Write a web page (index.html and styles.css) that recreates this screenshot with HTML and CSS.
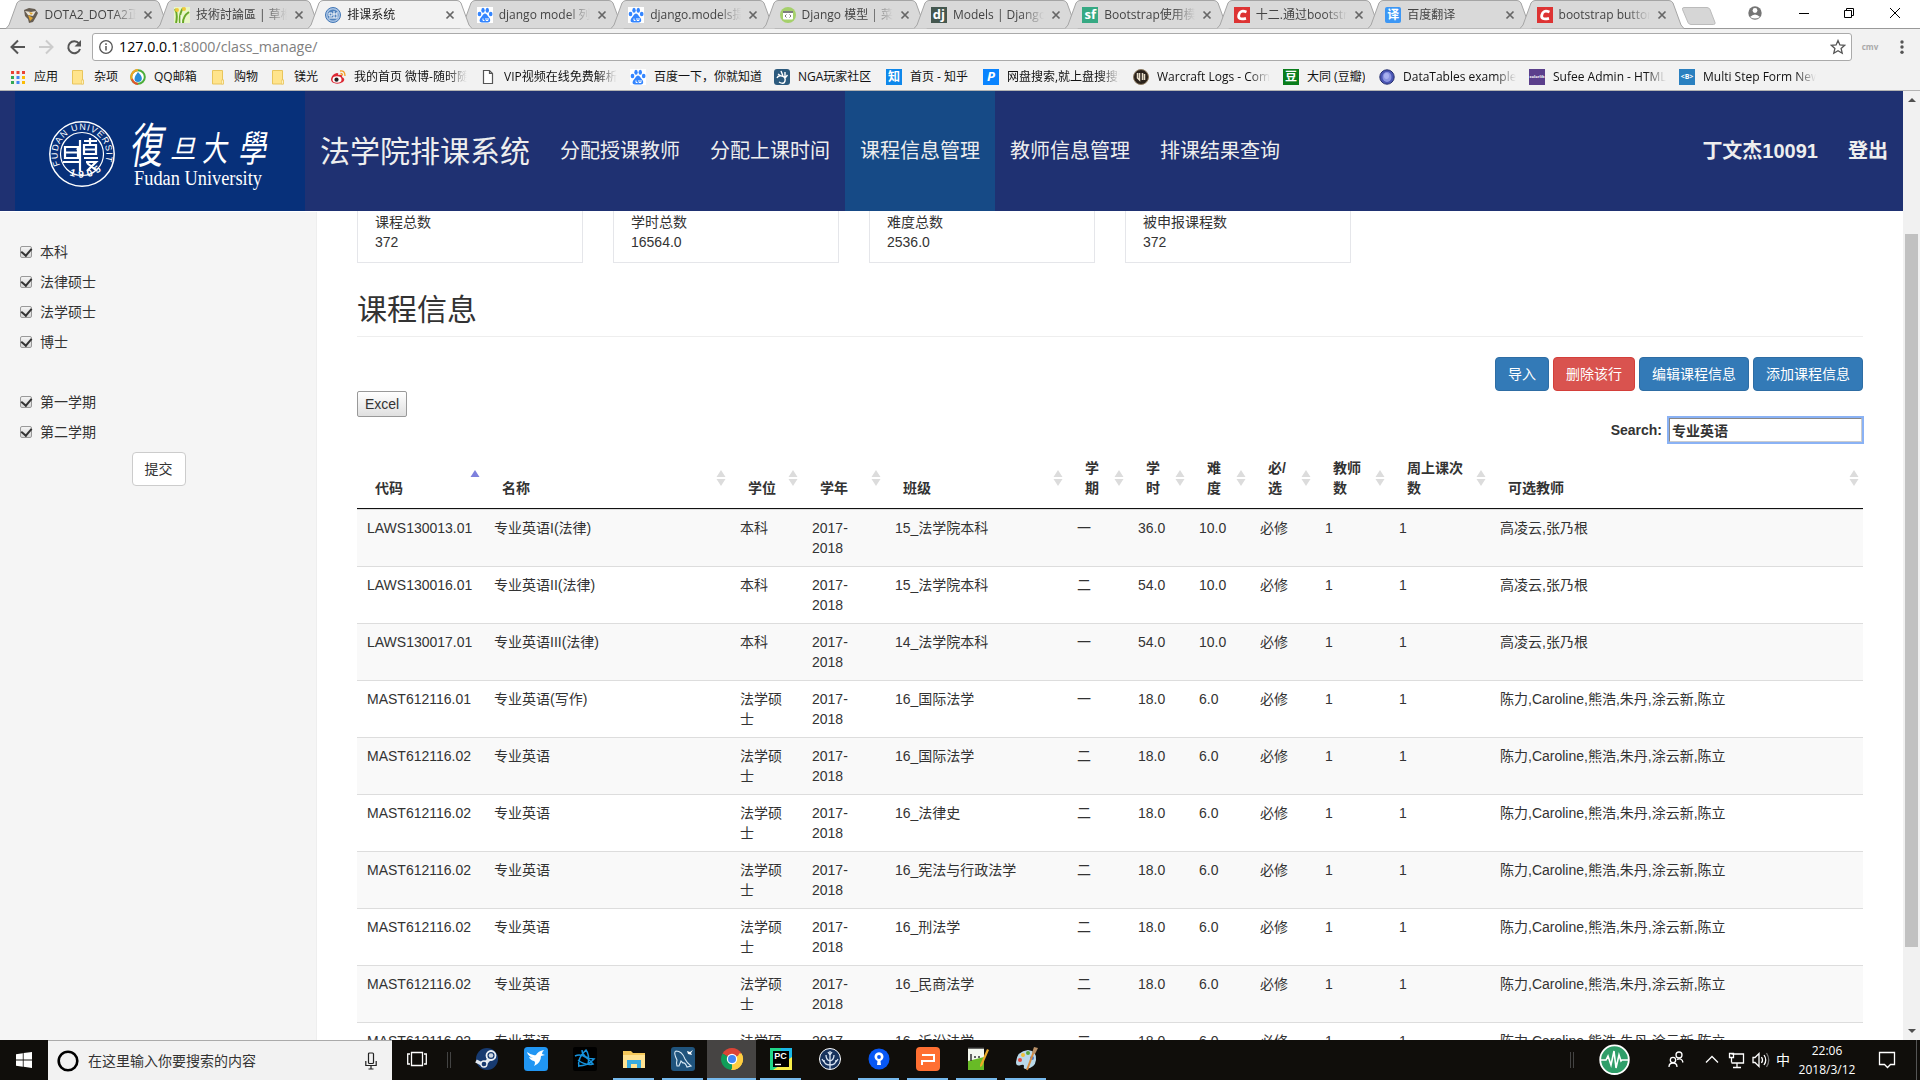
FILE: index.html
```html
<!DOCTYPE html>
<html lang="zh-CN">
<head>
<meta charset="utf-8">
<title>排课系统</title>
<link rel="stylesheet" href="styles.css">
</head>
<body>
<svg class="defs" width="0" height="0">
  <symbol id="tab" viewBox="0 0 164 29"><path d="M0 28.5L3 25 11 3Q12.500 .5 15 .5H149Q151.500 .5 153 3L161 25 164 28.500"/></symbol>
  <symbol id="x" viewBox="0 0 10 10"><path d="M1.500 1.500l7 7M8.500 1.500l-7 7" stroke="#666" stroke-width="1.700"/></symbol>
  <symbol id="paw" viewBox="0 0 16 16"><rect width="16" height="16" fill="#fff"/><g fill="#3385ff"><ellipse cx="2.500" cy="7" rx="1.800" ry="2.300"/><ellipse cx="6" cy="3.300" rx="1.700" ry="2.500"/><ellipse cx="10.300" cy="3.300" rx="1.700" ry="2.500"/><ellipse cx="13.700" cy="7" rx="1.800" ry="2.300"/><path d="M8 6.500c2 0 2.500 2.500 4 4 2 2 1.500 5-1 5H5c-3 0-3-3-1-5 1.500-1.500 2-4 4-4z"/></g><path d="M6 11.500v2h1.500M9 11v2.500h2V11" stroke="#fff" fill="none"/></symbol>
  <symbol id="folder" viewBox="0 0 16 16"><path d="M2.500 1.500h10v9.500h1v4h-11z" fill="#ffe48c" stroke="#e8c55c"/><path d="M11.500 11h2v4h-2z" fill="#fff0bd" stroke="#e8c55c" stroke-width=".6"/></symbol>
  <symbol id="c" viewBox="0 0 16 16"><rect width="16" height="16" fill="#d33"/><path d="M12.500 5Q6 2.500 4.800 8T12 11.300" fill="none" stroke="#fff" stroke-width="2.800"/></symbol>
  <symbol id="sort" viewBox="0 0 10 16"><path d="M5 0l4.500 7h-9zM5 16l4.500-7h-9z" fill="#dcdcdc"/></symbol>
</svg>

<div class="browser">
  <div class="titlebar">
    <div class="tabs">
      <div class="tab"><svg class="shape"><use href="#tab"/></svg><svg class="fav" viewBox="0 0 16 16"><path d="M1 3l5-2 6 1 3 4-2 4-3 5-4 1-1-4-3-3z" fill="#665d52"/><path d="M2 4l6 1 5-1-3 5-5-1z" fill="#e8e2d6"/><path d="M5 8l5 3-3 3zM6 5l4 1-2 2z" fill="#e0a42c"/></svg><span>DOTA2_DOTA2正式</span><svg class="close"><use href="#x"/></svg></div>
      <div class="tab"><svg class="shape"><use href="#tab"/></svg><svg class="fav" viewBox="0 0 16 16"><rect width="16" height="16" fill="#e9f6c7"/><path d="M2 16Q4 7 1 2M6 16Q5 7 9 1M9 16Q9 9 15 5" fill="none" stroke="#69a829" stroke-width="2"/><circle cx="3" cy="3" r="2" fill="#f1ca3a"/><circle cx="10" cy="2" r="2" fill="#f1ca3a"/><path d="M7 16V8" stroke="#fff"/></svg><span>技術討論區 | 草榴社區</span><svg class="close"><use href="#x"/></svg></div>
      <div class="tab active"><svg class="shape"><use href="#tab"/></svg><svg class="fav" viewBox="0 0 16 16"><circle cx="8" cy="8" r="7.500" fill="#a9c4e4" stroke="#4277b6"/><circle cx="8" cy="8" r="5.500" fill="#4f82bd"/><path d="M4 6h3v3H4zM4 11h8M9 4v7M12 5v6M8 7h4" stroke="#fff" fill="none"/></svg><span>排课系统</span><svg class="close"><use href="#x"/></svg></div>
      <div class="tab"><svg class="shape"><use href="#tab"/></svg><svg class="fav"><use href="#paw"/></svg><span>django model 列表</span><svg class="close"><use href="#x"/></svg></div>
      <div class="tab"><svg class="shape"><use href="#tab"/></svg><svg class="fav"><use href="#paw"/></svg><span>django.models提示</span><svg class="close"><use href="#x"/></svg></div>
      <div class="tab"><svg class="shape"><use href="#tab"/></svg><svg class="fav" viewBox="0 0 16 16"><circle cx="8" cy="8" r="8" fill="#a5d06b"/><rect x="3" y="4" width="10" height="8.500" rx="1" fill="#fff"/><path d="M3 5h10" stroke="#555" stroke-width="1.500"/><path d="M6.500 7.500L5 9l1.500 1.500M9.500 7.500L11 9l-1.500 1.500" fill="none" stroke="#555" stroke-width=".8"/></svg><span>Django 模型 | 菜鸟</span><svg class="close"><use href="#x"/></svg></div>
      <div class="tab"><svg class="shape"><use href="#tab"/></svg><b class="fav dj">dj</b><span>Models | Django d</span><svg class="close"><use href="#x"/></svg></div>
      <div class="tab"><svg class="shape"><use href="#tab"/></svg><b class="fav sf">sf</b><span>Bootstrap使用模态</span><svg class="close"><use href="#x"/></svg></div>
      <div class="tab"><svg class="shape"><use href="#tab"/></svg><svg class="fav"><use href="#c"/></svg><span>十二.通过bootstrap</span><svg class="close"><use href="#x"/></svg></div>
      <div class="tab"><svg class="shape"><use href="#tab"/></svg><b class="fav yi">译</b><span>百度翻译</span><svg class="close"><use href="#x"/></svg></div>
      <div class="tab"><svg class="shape"><use href="#tab"/></svg><svg class="fav"><use href="#c"/></svg><span>bootstrap button</span><svg class="close"><use href="#x"/></svg></div>
    </div>
    <svg class="newtab" viewBox="0 0 36 18"><path d="M3 .5h23q2 0 3 2l5 13q.5 2-1.500 2H10q-2 0-3-2L1.500 2.500Q1 .5 3 .5z" fill="#d6d6d6" stroke="#bbb"/></svg>
    <svg class="winctl" viewBox="0 0 180 28" width="180" height="28"><circle cx="15" cy="13" r="6.700" fill="#757575"/><circle cx="15" cy="10.500" r="2.400" fill="#fff"/><path d="M10 17q5-5 10 0-5 3-10 0z" fill="#fff"/><path d="M59 13.500h10" stroke="#000"/><path d="M104.500 10.500h7v7h-7zM106.500 10V8.500h7v7H112M150 8l10 10M160 8l-10 10" fill="none" stroke="#000"/></svg>
  </div>
  <div class="toolbar">
    <svg class="navicons" width="92" height="36" viewBox="0 0 92 36"><g fill="none" stroke="#555" stroke-width="2"><path d="M25 18H12M18 11.500L11.500 18l6.500 6.500"/><path d="M39 18h13M46 11.500l6.500 6.500-6.500 6.500" stroke="#ccc"/><path d="M79 14.500A6 6 0 1 0 80 20"/></g><path d="M81 11v6.500h-6.500z" fill="#555"/></svg>
    <div class="address">
      <svg width="16" height="16" viewBox="0 0 16 16"><circle cx="8" cy="8" r="6.300" fill="none" stroke="#555" stroke-width="1.300"/><path d="M8 7v4.500M8 4.300V6" stroke="#555" stroke-width="1.500"/></svg>
      <span class="url"><i>127.0.0.1</i>:8000/class_manage/</span>
      <svg class="star" width="16" height="16" viewBox="0 0 16 16"><path d="M8 1.500l1.900 4.400 4.800.4-3.600 3.200 1.100 4.700L8 11.700l-4.200 2.500 1.100-4.700L1.300 6.300l4.800-.4z" fill="none" stroke="#555" stroke-width="1.300"/></svg>
    </div>
    <span class="ext">cmv</span>
    <svg width="6" height="16" viewBox="0 0 6 16"><g fill="#555"><circle cx="3" cy="3" r="1.700"/><circle cx="3" cy="8" r="1.700"/><circle cx="3" cy="13.200" r="1.700"/></g></svg>
  </div>
  <div class="bookmarks">
    <div><svg viewBox="0 0 16 16"><path d="M1 3.500h14" stroke="#e94335" stroke-width="3" stroke-dasharray="3 2.500"/><path d="M1 8.500h3M1 13.500h3" stroke="#34a853" stroke-width="3"/><path d="M6.500 8.500h3M6.500 13.500h3" stroke="#4285f4" stroke-width="3"/><path d="M12 8.500h3M12 13.500h3" stroke="#fbbc05" stroke-width="3"/></svg><span>应用</span></div>
    <div><svg><use href="#folder"/></svg><span>杂项</span></div>
    <div><svg viewBox="0 0 16 16"><circle cx="8" cy="8" r="6.800" fill="#fff" stroke="#4cae3a" stroke-width="2"/><path d="M2 11A7 7 0 0 1 8 1" fill="none" stroke="#f2a423" stroke-width="2"/><path d="M8 15A7 7 0 0 1 2 10" fill="none" stroke="#e5522d" stroke-width="2"/><path d="M8 3q6 6 3 9-3 2-6 0-2-3 3-9z" fill="#2a8ed8"/></svg><span>QQ邮箱</span></div>
    <div><svg><use href="#folder"/></svg><span>购物</span></div>
    <div><svg><use href="#folder"/></svg><span>镁光</span></div>
    <div><svg viewBox="0 0 16 16"><path d="M1 10q1-5 6-6 2 0 1 2 5-1 4 2 4 2 1 5-5 3-9 1-3-1-3-4z" fill="#dc2834"/><ellipse cx="7" cy="10.500" rx="4.500" ry="3.200" fill="#fff"/><circle cx="6.500" cy="10.700" r="2.100" fill="#222"/><path d="M10 2q5-1 5 5M10.500 4.500q2 0 2 2" fill="none" stroke="#f39b26" stroke-width="1.300"/></svg><span>我的首页 微博-随时随地</span></div>
    <div><svg viewBox="0 0 16 16"><path d="M3.500 1.500h6l3 3v10h-9zM9.500 1.500v3h3" fill="#fff" stroke="#555" stroke-width="1.200"/></svg><span>VIP视频在线免费解析</span></div>
    <div><svg><use href="#paw"/></svg><span>百度一下，你就知道</span></div>
    <div><svg viewBox="0 0 16 16"><rect width="16" height="16" rx="3" fill="#2c5a7d"/><path d="M5 13q5 3 6-1 1-4-3-5-4-1-5 2M4 5l3 2M7 2l2 5M11 3v5M13.500 6L11 9" fill="none" stroke="#fff" stroke-width="1.400"/></svg><span>NGA玩家社区</span></div>
    <div><b class="zhi">知</b><span>首页 - 知乎</span></div>
    <div><b class="pp">P</b><span>网盘搜索,就上盘搜搜索</span></div>
    <div><svg viewBox="0 0 16 16"><circle cx="8" cy="8" r="7.500" fill="#2a221b" stroke="#8d7b61"/><path d="M4.500 4v5l2 2V4M9.500 11V4M11.500 5v6" fill="none" stroke="#e8dec9" stroke-width="1.500"/></svg><span>Warcraft Logs - Comb</span></div>
    <div><b class="dou">豆</b><span>大同 (豆瓣)</span></div>
    <div><svg viewBox="0 0 16 16"><circle cx="8" cy="8" r="7.200" fill="#4a55b4" stroke="#26306f"/><ellipse cx="8" cy="8" rx="4.500" ry="5" fill="#8a94e0"/><ellipse cx="7.500" cy="7" rx="2.500" ry="3" fill="#a9b1f0"/></svg><span>DataTables example</span></div>
    <div><b class="color">colorlib</b><span>Sufee Admin - HTML5</span></div>
    <div><b class="bb">&lt;B&gt;</b><span>Multi Step Form New</span></div>
  </div>
</div>

<div class="viewport">
  <div class="page">
    <nav class="navbar">
      <svg class="logo" viewBox="0 0 290 120" width="290" height="120">
        <defs><path id="ring" d="M45.200 74A24.300 24.300 0 1 1 88.800 74"/><path id="ring2" d="M41 72A30.500 30.500 0 0 0 93 72"/></defs>
        <circle cx="67" cy="63" r="32.200" fill="none" stroke="#fff" stroke-width="1.500"/>
        <circle cx="67" cy="63" r="21.500" fill="none" stroke="#fff" stroke-width="1.200"/>
        <text class="sealtext"><textPath href="#ring">FUDAN UNIVERSITY</textPath></text>
        <text class="sealyear"><textPath href="#ring2" startOffset="18">1905</textPath></text>
        <g fill="none" stroke="#fff" stroke-width="2.200"><path d="M50 56h13v11H50zM50 61.500h13M48 71h16M65 49v6l-3 4M65 53v27M69 50h13M69 54h12v9H69zM69 58.500h12M69 67h14M71 71h10l-9 9M72 72l10 8M75 47v7"/></g>
        <g class="brush"><text transform="translate(114 72) scale(.83 1.200) skewX(-13)" font-size="40">復</text><text transform="translate(155 67) skewX(-13)" font-size="26">旦</text><text transform="translate(187 70) scale(.85 1.150) skewX(-10)" font-size="30">大</text><text transform="translate(223 71) scale(.9 1.200) skewX(-13)" font-size="31">學</text></g>
        <text class="fudan" x="119" y="94" textLength="128" lengthAdjust="spacingAndGlyphs">Fudan University</text>
      </svg>
      <a class="brand">法学院排课系统</a>
      <a>分配授课教师</a><a>分配上课时间</a><a class="current">课程信息管理</a><a>教师信息管理</a><a>排课结果查询</a>
      <a class="user">丁文杰10091</a><a class="logout">登出</a>
    </nav>
    <div class="body">
      <aside class="sidebar">
        <label><i class="check"></i>本科</label>
        <label><i class="check"></i>法律硕士</label>
        <label><i class="check"></i>法学硕士</label>
        <label><i class="check"></i>博士</label>
        <label class="term"><i class="check"></i>第一学期</label>
        <label><i class="check"></i>第二学期</label>
        <button class="btn submit">提交</button>
      </aside>
      <main>
        <div class="cards">
          <div>课程总数<br>372</div><div>学时总数<br>16564.0</div><div>难度总数<br>2536.0</div><div>被申报课程数<br>372</div>
        </div>
        <h1>课程信息</h1>
        <div class="actions"><button class="btn primary">导入</button><button class="btn danger">删除该行</button><button class="btn primary">编辑课程信息</button><button class="btn primary">添加课程信息</button></div>
        <button class="excel">Excel</button>
        <label class="search">Search:<input type="text" value="专业英语"></label>
        <table>
          <colgroup><col class="c1"><col class="c2"><col class="c3"><col class="c4"><col class="c5"><col class="c6"><col class="c6"><col class="c6"><col class="c9"><col class="c10"><col class="c11"><col></colgroup>
          <thead><tr>
            <th>代码<svg class="sort" viewBox="0 0 10 16"><path d="M5 0l4.500 7h-9z" fill="#7d80dd"/></svg></th>
            <th>名称<svg class="sort"><use href="#sort"/></svg></th>
            <th>学位<svg class="sort"><use href="#sort"/></svg></th>
            <th>学年<svg class="sort"><use href="#sort"/></svg></th>
            <th>班级<svg class="sort"><use href="#sort"/></svg></th>
            <th>学期<svg class="sort"><use href="#sort"/></svg></th>
            <th>学时<svg class="sort"><use href="#sort"/></svg></th>
            <th>难度<svg class="sort"><use href="#sort"/></svg></th>
            <th>必/<br>选<svg class="sort"><use href="#sort"/></svg></th>
            <th>教师数<svg class="sort"><use href="#sort"/></svg></th>
            <th>周上课次数<svg class="sort"><use href="#sort"/></svg></th>
            <th>可选教师<svg class="sort"><use href="#sort"/></svg></th>
          </tr></thead>
          <tbody>
            <tr><td>LAWS130013.01<td>专业英语I(法律)<td>本科<td>2017-<br>2018<td>15_法学院本科<td>一<td>36.0<td>10.0<td>必修<td>1<td>1<td>高凌云,张乃根</tr>
            <tr><td>LAWS130016.01<td>专业英语II(法律)<td>本科<td>2017-<br>2018<td>15_法学院本科<td>二<td>54.0<td>10.0<td>必修<td>1<td>1<td>高凌云,张乃根</tr>
            <tr><td>LAWS130017.01<td>专业英语III(法律)<td>本科<td>2017-<br>2018<td>14_法学院本科<td>一<td>54.0<td>10.0<td>必修<td>1<td>1<td>高凌云,张乃根</tr>
            <tr><td>MAST612116.01<td>专业英语(写作)<td>法学硕士<td>2017-<br>2018<td>16_国际法学<td>一<td>18.0<td>6.0<td>必修<td>1<td>1<td>陈力,Caroline,熊浩,朱丹,涂云新,陈立</tr>
            <tr><td>MAST612116.02<td>专业英语<td>法学硕士<td>2017-<br>2018<td>16_国际法学<td>二<td>18.0<td>6.0<td>必修<td>1<td>1<td>陈力,Caroline,熊浩,朱丹,涂云新,陈立</tr>
            <tr><td>MAST612116.02<td>专业英语<td>法学硕士<td>2017-<br>2018<td>16_法律史<td>二<td>18.0<td>6.0<td>必修<td>1<td>1<td>陈力,Caroline,熊浩,朱丹,涂云新,陈立</tr>
            <tr><td>MAST612116.02<td>专业英语<td>法学硕士<td>2017-<br>2018<td>16_宪法与行政法学<td>二<td>18.0<td>6.0<td>必修<td>1<td>1<td>陈力,Caroline,熊浩,朱丹,涂云新,陈立</tr>
            <tr><td>MAST612116.02<td>专业英语<td>法学硕士<td>2017-<br>2018<td>16_刑法学<td>二<td>18.0<td>6.0<td>必修<td>1<td>1<td>陈力,Caroline,熊浩,朱丹,涂云新,陈立</tr>
            <tr><td>MAST612116.02<td>专业英语<td>法学硕士<td>2017-<br>2018<td>16_民商法学<td>二<td>18.0<td>6.0<td>必修<td>1<td>1<td>陈力,Caroline,熊浩,朱丹,涂云新,陈立</tr>
            <tr><td>MAST612116.02<td>专业英语<td>法学硕士<td>2017-<br>2018<td>16_诉讼法学<td>二<td>18.0<td>6.0<td>必修<td>1<td>1<td>陈力,Caroline,熊浩,朱丹,涂云新,陈立</tr>
          </tbody>
        </table>
      </main>
    </div>
  </div>
  <div class="scrollbar"><i class="up"></i><div class="thumb"></div><i class="down"></i></div>
</div>

<div class="taskbar">
  <div class="start"><svg width="16" height="16" viewBox="0 0 16 16"><path d="M0 2.200l6.800-1v6.300H0zM7.600 1.100L16 0v7.500H7.600zM0 8.400h6.800v6.300L0 13.800zM7.600 8.400H16V16l-8.400-1.200z" fill="#fff"/></svg></div>
  <div class="find"><svg width="22" height="22" viewBox="0 0 22 22"><circle cx="11" cy="11" r="9.300" fill="none" stroke="#000" stroke-width="2.600"/></svg><span>在这里输入你要搜索的内容</span><svg width="12" height="18" viewBox="0 0 12 18"><rect x="3.500" y="1" width="5" height="10.500" rx="1" fill="none" stroke="#222" stroke-width="1.200"/><path d="M.8 9v4.500h10.400V9M6 13.500V17M3.500 17h5" fill="none" stroke="#222" stroke-width="1.200"/></svg></div>
  <div class="app"><svg width="20" height="16" viewBox="0 0 20 16"><path d="M4.500 1.500h11v13h-11zM3 3H.7v10H3M17 3h2.300v10H17" fill="none" stroke="#fff" stroke-width="1.300"/></svg></div>
  <div class="grip"></div>
  <div class="app"><svg viewBox="0 0 24 24"><circle cx="12" cy="12" r="11" fill="#173a70"/><path d="M1 14l8 4 7-8" fill="none" stroke="#dfe6ee" stroke-width="3.500"/><circle cx="16" cy="8.500" r="4.500" fill="#173a70" stroke="#eef2f6" stroke-width="1.800"/><circle cx="16" cy="8.500" r="2.300" fill="#cdd6e1"/><circle cx="9" cy="17" r="3" fill="#173a70" stroke="#eef2f6" stroke-width="1.300"/></svg></div>
  <div class="app"><svg viewBox="0 0 24 24"><rect width="24" height="24" rx="3.500" fill="#2196f3"/><path d="M3 5q5 4 9 3Q14 4 20 3q-2 2-2 4l3 1-4 1q0 7-7 10 2-4 0-5-4-1-5-4l4 1Q4 9 3 5z" fill="#fff"/></svg></div>
  <div class="app"><svg viewBox="0 0 24 24"><rect width="24" height="24" rx="2" fill="#000"/><path d="M2 9q8-4 18 8-7 2-15-4M6 20Q4 11 13 3q4 5 2 15M9 3q0 8 12 9-6 7-16 7" fill="none" stroke="#1592dc" stroke-width="1.500"/></svg></div>
  <div class="app open"><svg viewBox="0 0 24 24"><path d="M1 4h8l2 2h12v15H1z" fill="#f5c85b"/><path d="M1 8h22v13H1z" fill="#ffe292"/><path d="M5 13h14v8h-4v-4H9v4H5z" fill="#38a9df"/></svg></div>
  <div class="app open"><svg viewBox="0 0 24 24"><rect width="24" height="24" rx="3" fill="#20547d"/><path d="M6 19q-1-3 0-6-4-8-1-9 6 0 9 8 2 4 6 7l-4 1q-2-5-4-4l-2-2-2 5z" fill="none" stroke="#d8e9f5" stroke-width="1.100"/><path d="M16 4l3 1 3-2-2 3 1 2-4-1z" fill="#fff"/></svg></div>
  <div class="app chrome open"><svg viewBox="0 0 24 24"><path d="M12 12L2.500 6.500A11 11 0 0 1 21.500 6.500z" fill="#db4437"/><path d="M12 12l9.500-5.500A11 11 0 0 1 12 23z" fill="#ffcd40"/><path d="M12 12v11A11 11 0 0 1 2.500 6.500z" fill="#109d59"/><path d="M11 23l6-9 2-7.500h2.500A11 11 0 0 1 11 23z" fill="#ffcd40"/><circle cx="12" cy="12" r="5.200" fill="#fff"/><circle cx="12" cy="12" r="4" fill="#4285f4"/></svg></div>
  <div class="app open"><svg viewBox="0 0 24 24"><path d="M1 1h22v22H1z" fill="#21d789"/><path d="M12 1h11v22H7z" fill="#1ab8e8"/><path d="M23 10v13H4z" fill="#f8ee49"/><path d="M4 4h16v16H4z" fill="#000"/><path d="M6 17.500h6" stroke="#fff" stroke-width="1.400"/><text x="5.300" y="12" font-size="9" font-weight="bold" fill="#fff" font-family="Liberation Sans, sans-serif">PC</text></svg></div>
  <div class="app"><svg viewBox="0 0 24 24"><circle cx="12" cy="12" r="10.500" fill="#17325d" stroke="#fff"/><path d="M12 23V4M12 18q-6 0-6-5M12 18q6 0 6-5M12 14q-4-1-4-6M12 14q4-1 4-6M6 15l-2-3M18 15l2-3M12 8l-2-3M12 8l2-3" fill="none" stroke="#d9e4f3" stroke-width="1.300"/></svg></div>
  <div class="app open"><svg viewBox="0 0 24 24"><circle cx="12" cy="12" r="10.500" fill="#0757f5"/><path d="M10 18l.5-4a4.500 4.500 0 1 1 3 0l.5 4z" fill="#fff"/><circle cx="12" cy="10" r="1.900" fill="#0757f5"/></svg></div>
  <div class="app open"><svg viewBox="0 0 24 24"><rect width="24" height="24" rx="4" fill="#ff6f32"/><path d="M6 8h12v6H6v4" fill="none" stroke="#fff" stroke-width="2"/></svg></div>
  <div class="app open"><svg viewBox="0 0 24 24"><path d="M3 1h16v22H3z" fill="#f4f8ef"/><path d="M3 14l16-4v13H3z" fill="#68bb26"/><path d="M3 1h16M6 7v7M9 10h2M13 10h2" stroke="#333" stroke-width="1.500"/><path d="M15 18l7-16 2 1-7 16-2 1z" fill="#eca927"/></svg></div>
  <div class="app open"><svg viewBox="0 0 24 24"><path d="M2 15Q3 4 14 3q9 1 8 10-1 8-10 9-3 0-2-3 0-2-3-1-5 2-5-3z" fill="#b9d8ea"/><circle cx="6" cy="13" r="2" fill="#e2483c"/><circle cx="9" cy="8" r="2" fill="#efc13a"/><circle cx="14" cy="6" r="2" fill="#5aa63c"/><circle cx="18" cy="11" r="2" fill="#4878c8"/><path d="M20 4l-7 19" stroke="#d78a3f" stroke-width="2"/><path d="M18 6l2-6 4 1-3 6z" fill="#b99067"/></svg></div>
  <svg class="tray" width="225" height="40" viewBox="0 0 225 40">
    <path d="M2.500 12v16M5.500 12v16" stroke="#444"/>
    <circle cx="46.500" cy="19.700" r="14.300" fill="#2f9e69" stroke="#fff" stroke-width="1.800"/><path d="M33 20h5l2-4 3 9 3-14 2 17 3-13 2 6 1-1h6" fill="none" stroke="#fff" stroke-width="1.600"/>
    <g fill="none" stroke="#fff" stroke-width="1.300"><circle cx="111" cy="15" r="3"/><circle cx="105" cy="20" r="2.700"/><path d="M101 27q0-4 4-4t4 4M109 19.500q5-2 6 3M138 22.500l6-6 6 6M163.500 14h12v9h-12M169 23v4M165 27.500h8M161.500 13.500h4v4h-4zM163.500 17.500v5M185 17.500h2l4-4v13l-4-4h-2zM193.500 17q2 3 0 6M196 15q3.500 5 0 10"/><path d="M198.500 13q4.500 7 0 14" stroke="#777"/></g>
    <text x="208" y="25" font-size="14" fill="#fff" font-family="Noto Sans CJK SC, sans-serif">中</text>
  </svg>
  <div class="clock">22:06<br>2018/3/12</div>
  <svg class="notice" width="60" height="40" viewBox="0 0 60 40"><path d="M19.500 12.500h15v12h-4l-3 3-3-3h-5z" fill="none" stroke="#fff" stroke-width="1.300"/><path d="M56.500 0v40" stroke="#555"/></svg>
</div>
</body>
</html>
```
FILE: styles.css
```css
* { box-sizing: border-box; }
body {
  margin: 0; width: 1920px; height: 1080px; overflow: hidden;
  display: flex; flex-direction: column;
  font: 14px/20px "Liberation Sans", "Noto Sans CJK SC", sans-serif;
  color: #333; background: #fff;
}
svg { display: block; flex: none; }
.defs { position: absolute; }
i { font-style: normal; }

/* browser chrome */
.browser { height: 91px; flex: none; background: #f2f2f2; border-bottom: 1px solid #b3b3b3; font: 12px/18px "Open Sans", "Noto Sans CJK SC", sans-serif; }
.titlebar { height: 29px; display: flex; background: #fff; border-bottom: 1px solid #999; }
.tabs { display: flex; padding-left: 5.5px; }
.tab { position: relative; width: 164px; height: 29px; margin-right: -12.6px; padding: 0 17px; display: flex; align-items: center; color: #444; }
.tab .shape { position: absolute; left: 0; top: 0; width: 164px; height: 29px; fill: #d9d9d9; stroke: #a5a5a5; }
.tab.active { z-index: 2; color: #222; }
.tab.active .shape { fill: #f2f2f2; }
.tab span { position: relative; width: 92px; margin: 0 7px 0 6px; height: 18px; overflow: hidden; white-space: nowrap; -webkit-mask-image: linear-gradient(90deg, #000 75%, transparent); mask-image: linear-gradient(90deg, #000 75%, transparent); }
.fav { position: relative; width: 16px; height: 16px; flex: none; overflow: hidden; text-align: center; font: bold 13px/15px "Open Sans", "Noto Sans CJK SC", sans-serif; color: #fff; }
.dj { background: #44574f; }
.sf { background: #36a983; }
.yi { background: #3c97f5; border-radius: 2px; font-size: 12px; }
.close { position: relative; width: 10px; height: 10px; }
.newtab { width: 36px; height: 18px; margin: 7px 0 0 10px; }
.winctl { margin-left: 23px; }
.toolbar { height: 35px; display: flex; align-items: center; }
.address { width: 1760px; height: 28px; border: 1px solid #aaa; border-radius: 3px; background: #fff; display: flex; align-items: center; padding: 0 5px; }
.url { flex: 1; margin-left: 5px; font-size: 14.25px; color: #808080; }
.url i { color: #000; }
.ext { width: 36px; text-align: center; color: #aaa; font-size: 8px; font-weight: bold; margin-right: 11px; }
.bookmarks { display: grid; grid-template-columns: 60px 60px 80px 60px 60px 150px 150px 144px 112px 97px 150px 150px 96px 150px 150px 150px; padding-left: 10px; height: 25px; align-items: center; color: #111; }
.bookmarks div { display: flex; gap: 8px; align-items: center; }
.bookmarks svg { width: 16px; height: 16px; }
.bookmarks span { max-width: 113px; overflow: hidden; white-space: nowrap; }
.bookmarks div:nth-child(6) span, .bookmarks div:nth-child(7) span, .bookmarks div:nth-child(n+11):not(:nth-child(13)) span { -webkit-mask-image: linear-gradient(90deg, #000 82%, transparent); mask-image: linear-gradient(90deg, #000 82%, transparent); }
.bookmarks b { width: 16px; height: 16px; flex: none; color: #fff; font-size: 12px; line-height: 15px; text-align: center; overflow: hidden; }
.bookmarks .zhi { background: #0f88eb; }
.bookmarks .pp { background: #0a84ff; font-style: italic; font-size: 13px; }
.bookmarks .dou { background: #0a7d1c; }
.bookmarks .color { background: #5b3f8c; font-size: 4px; }
.bookmarks .bb { background: #2a80c0; font-size: 7px; }

/* page */
.viewport { height: 949px; flex: none; display: flex; overflow: hidden; }
.page { width: 1903px; display: flex; flex-direction: column; overflow: hidden; }
.navbar { height: 120px; flex: none; background: #1f3172; display: flex; padding-left: 15px; }
.navbar a { padding: 0 15px; font-size: 20px; line-height: 121px; height: 120px; color: #eee; white-space: nowrap; }
.navbar .brand { font-size: 30px; }
.navbar .current { background: #164a86; }
.navbar .user { margin-left: auto; font-weight: bold; }
.navbar .logout { font-weight: bold; }
.logo { background: #07307a; fill: #fff; }
.sealtext { font: 9px "Liberation Sans", sans-serif; letter-spacing: .9px; }
.sealyear { font: bold 10px "Liberation Sans", sans-serif; letter-spacing: 4px; }
.brush { font-family: "Noto Sans CJK TC", sans-serif; font-weight: 400; }
.fudan { font: 20px "Liberation Serif", serif; }
.body { display: flex; flex: 1; min-height: 0; }
.sidebar { width: 317px; margin-top: 1px; padding: 25px 20px; background: #f5f5f5; border-right: 1px solid #eee; display: flex; flex-direction: column; }
.sidebar label { height: 30px; display: flex; align-items: center; gap: 8px; }
.sidebar .term { margin-top: 30px; }
.check { width: 12px; height: 12px; border: 1px solid #999; border-radius: 2px; background: linear-gradient(#f3f3f3, #d8d8d8); display: grid; place-items: center; }
.check::after { content: ""; width: 5px; height: 8px; border: solid #333; border-width: 0 2px 2px 0; transform: translateY(-1px) rotate(40deg); }
.btn { height: 34px; padding: 0 12px; border: 1px solid #ccc; border-radius: 4px; font: inherit; color: #333; background: #fff; }
.submit { align-self: center; margin: 5px 0 0 1px; }
main { flex: 1; padding: 0 40px; display: flex; flex-direction: column; overflow: hidden; }
main > * { flex: none; }
.cards { display: flex; gap: 30px; }
.cards div { width: 226px; height: 52px; border: 1px solid #e5e6ea; border-top: 0; padding: 1px 17px; }
h1 { margin: 26px 0 0; height: 48px; border-bottom: 1px solid #eee; font-size: 30px; line-height: 42px; font-weight: 400; }
.actions { display: flex; justify-content: flex-end; gap: 4px; margin-top: 20px; }
.primary { color: #fff; background: #337ab7; border-color: #2e6da4; }
.danger { color: #fff; background: #d9534f; border-color: #d43f3a; }
.excel { align-self: flex-start; width: 50px; height: 26px; padding: 0; border: 1px solid #999; border-radius: 2px; background: linear-gradient(#fff, #e0e0e0); font: inherit; color: #333; }
.search { align-self: flex-end; display: flex; align-items: center; gap: 7px; height: 26px; font-weight: bold; }
.search input { width: 193px; height: 24px; padding: 1px 2px; border: 1px solid #999; border-color: #888 #ccc #ccc #888; outline: 2px solid #8ab2f5; font: inherit; color: #333; margin-right: 1px; }
table { width: 1506px; margin-top: 5px; table-layout: fixed; border-collapse: separate; border-spacing: 0; }
.c1 { width: 127px; } .c2 { width: 246px; } .c3 { width: 72px; } .c4 { width: 83px; } .c5 { width: 182px; }
.c6 { width: 61px; } .c9 { width: 65px; } .c10 { width: 74px; } .c11 { width: 101px; }
th { position: relative; padding: 10px 25px 10px 18px; text-align: left; vertical-align: bottom; border-bottom: 1px solid #111; }
.sort { position: absolute; right: 4px; bottom: 22px; width: 10px; height: 16px; }
td { padding: 8px 10px; height: 57px; vertical-align: top; border-top: 1px solid #ddd; }
tbody tr:nth-child(odd) { background: #f9f9f9; }
.scrollbar { width: 17px; height: 949px; background: #f1f1f1; display: flex; flex-direction: column; align-items: center; }
.scrollbar i { border: 4px solid transparent; }
.up { margin-top: 3px; border-bottom-color: #505050 !important; }
.down { margin: auto 0 3px; border-top-color: #505050 !important; }
.thumb { width: 13px; height: 713px; margin-top: 132px; background: #c1c1c1; }

/* taskbar */
.taskbar { height: 40px; flex: none; background: #100e0b; display: flex; }
.start { width: 48px; display: grid; place-items: center; }
.find { width: 344px; background: #f2f2f2; border-top: 1px solid #aaa; display: flex; align-items: center; padding: 0 15px 0 9px; }
.find span { flex: 1; margin-left: 9px; color: #333; }
.app { width: 49px; display: flex; align-items: center; justify-content: center; border-bottom: 2px solid transparent; }
.app svg:not([width]) { width: 24px; height: 24px; }
.open { width: 41px; margin: 0 4px; border-color: #76b9ed; }
.chrome { width: 49px; margin: 0; background: #464443; }
.grip { width: 4px; height: 16px; margin: 12px 11px 0 6px; border: solid #444; border-width: 0 1px; }
.tray { margin-left: auto; }
.clock { width: 68px; text-align: center; color: #fff; font: 12px/19px "Open Sans", sans-serif; padding-top: 1px; white-space: nowrap; }
.notice { margin-left: -1px; }
```
